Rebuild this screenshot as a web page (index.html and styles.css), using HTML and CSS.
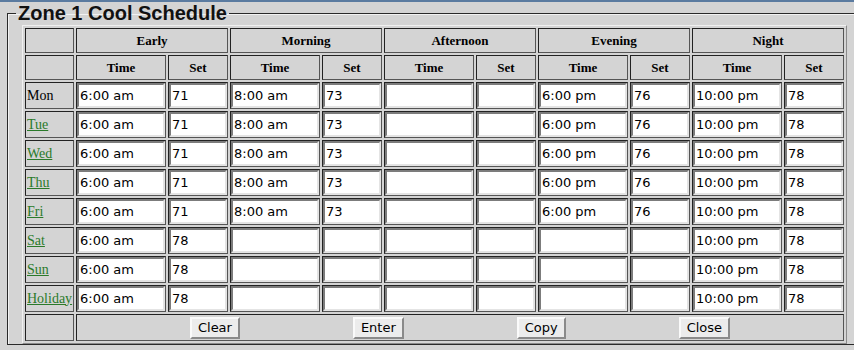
FILE: index.html
```html
<!DOCTYPE html>
<html lang="en">
<head>
    <meta charset="UTF-8">
    <meta name="viewport" content="width=device-width, initial-scale=1.0">
    <title>Zone 1 Cool Schedule</title>
    <link rel="stylesheet" href="styles.css">
</head>
<body>
    <div class="topbar"></div>
    <fieldset class="zone">
        <legend>Zone 1 Cool Schedule</legend>
        <table class="sched">
            <tr class="head">
                <th class="daycol"></th>
                <th colspan="2">Early</th>
                <th colspan="2">Morning</th>
                <th colspan="2">Afternoon</th>
                <th colspan="2">Evening</th>
                <th colspan="2">Night</th>
            </tr>
            <tr class="head">
                <th class="daycol"></th>
                <th class="tcol">Time</th><th class="scol">Set</th>
                <th class="tcol">Time</th><th class="scol">Set</th>
                <th class="tcol">Time</th><th class="scol">Set</th>
                <th class="tcol">Time</th><th class="scol">Set</th>
                <th class="tcol">Time</th><th class="scol">Set</th>
            </tr>
            <tr>
                <td class="day">Mon</td>
                <td><input value="6:00 am"></td><td><input value="71"></td>
                <td><input value="8:00 am"></td><td><input value="73"></td>
                <td><input value=""></td><td><input value=""></td>
                <td><input value="6:00 pm"></td><td><input value="76"></td>
                <td><input value="10:00 pm"></td><td><input value="78"></td>
            </tr>
            <tr>
                <td class="day"><a href="#">Tue</a></td>
                <td><input value="6:00 am"></td><td><input value="71"></td>
                <td><input value="8:00 am"></td><td><input value="73"></td>
                <td><input value=""></td><td><input value=""></td>
                <td><input value="6:00 pm"></td><td><input value="76"></td>
                <td><input value="10:00 pm"></td><td><input value="78"></td>
            </tr>
            <tr>
                <td class="day"><a href="#">Wed</a></td>
                <td><input value="6:00 am"></td><td><input value="71"></td>
                <td><input value="8:00 am"></td><td><input value="73"></td>
                <td><input value=""></td><td><input value=""></td>
                <td><input value="6:00 pm"></td><td><input value="76"></td>
                <td><input value="10:00 pm"></td><td><input value="78"></td>
            </tr>
            <tr>
                <td class="day"><a href="#">Thu</a></td>
                <td><input value="6:00 am"></td><td><input value="71"></td>
                <td><input value="8:00 am"></td><td><input value="73"></td>
                <td><input value=""></td><td><input value=""></td>
                <td><input value="6:00 pm"></td><td><input value="76"></td>
                <td><input value="10:00 pm"></td><td><input value="78"></td>
            </tr>
            <tr>
                <td class="day"><a href="#">Fri</a></td>
                <td><input value="6:00 am"></td><td><input value="71"></td>
                <td><input value="8:00 am"></td><td><input value="73"></td>
                <td><input value=""></td><td><input value=""></td>
                <td><input value="6:00 pm"></td><td><input value="76"></td>
                <td><input value="10:00 pm"></td><td><input value="78"></td>
            </tr>
            <tr>
                <td class="day"><a href="#">Sat</a></td>
                <td><input value="6:00 am"></td><td><input value="78"></td>
                <td><input value=""></td><td><input value=""></td>
                <td><input value=""></td><td><input value=""></td>
                <td><input value=""></td><td><input value=""></td>
                <td><input value="10:00 pm"></td><td><input value="78"></td>
            </tr>
            <tr>
                <td class="day"><a href="#">Sun</a></td>
                <td><input value="6:00 am"></td><td><input value="78"></td>
                <td><input value=""></td><td><input value=""></td>
                <td><input value=""></td><td><input value=""></td>
                <td><input value=""></td><td><input value=""></td>
                <td><input value="10:00 pm"></td><td><input value="78"></td>
            </tr>
            <tr>
                <td class="day"><a href="#">Holiday</a></td>
                <td><input value="6:00 am"></td><td><input value="78"></td>
                <td><input value=""></td><td><input value=""></td>
                <td><input value=""></td><td><input value=""></td>
                <td><input value=""></td><td><input value=""></td>
                <td><input value="10:00 pm"></td><td><input value="78"></td>
            </tr>
            <tr>
                <td class="day"></td>
                <td colspan="10">
                    <div class="buttons">
                        <button>Clear</button>
                        <button>Enter</button>
                        <button>Copy</button>
                        <button>Close</button>
                    </div>
                </td>
            </tr>
        </table>
    </fieldset>
</body>
</html>
```

FILE: styles.css
```css
body {
    margin: 0;
    background: #d4d4d4;
    overflow: hidden;
    font-family: "Liberation Serif", serif;
}
.topbar {
    height: 2px;
    background: #5b7ba0;
}
.zone {
    margin: 0 -30px 0 7px;
    padding: 0 0 0 14px;
    border: 1px solid #2a2a2a;
    box-shadow: inset 1px 1px 0 #f2f2f2;
    min-width: 0;
}
.zone legend {
    font-family: "Liberation Sans", Arial, sans-serif;
    font-weight: bold;
    font-size: 20px;
    line-height: 23px;
    padding: 0 2px;
    margin-left: -6px;
    color: #111;
}
.sched {
    border-spacing: 2px;
    border: 1px solid;
    border-color: #f0f0f0 #8a8a8a #8a8a8a #f0f0f0;
}
.sched th,
.sched td {
    padding: 0;
    border: 1px solid;
    border-color: #222 #555 #555 #222;
}
.sched th {
    height: 23px;
    font-size: 13px;
    font-weight: bold;
    text-align: center;
}
.daycol { width: 47px; }
.tcol { width: 88px; }
.scol { width: 58px; }
.sched td {
    height: 25px;
}
.day {
    font-size: 14px;
    padding-left: 1px !important;
}
.day a {
    color: #2a7a2a;
}
.sched input {
    box-sizing: border-box;
    display: block;
    width: 100%;
    height: 25px;
    margin: 0;
    padding: 0 1px;
    border: 2px solid;
    border-color: #7c7c7c #e4e4e4 #e4e4e4 #7c7c7c;
    background: #fff;
    font-family: "DejaVu Sans", sans-serif;
    font-size: 13px;
    color: #000;
    outline: none;
}
.buttons {
    display: flex;
    justify-content: space-evenly;
    align-items: center;
}
.buttons button {
    height: 22px;
    padding: 0 6px;
    border: 2px solid;
    border-color: #fafafa #8a8a8a #8a8a8a #fafafa;
    background: #ececec;
    font-family: "DejaVu Sans", sans-serif;
    font-size: 13px;
    color: #000;
}
```
